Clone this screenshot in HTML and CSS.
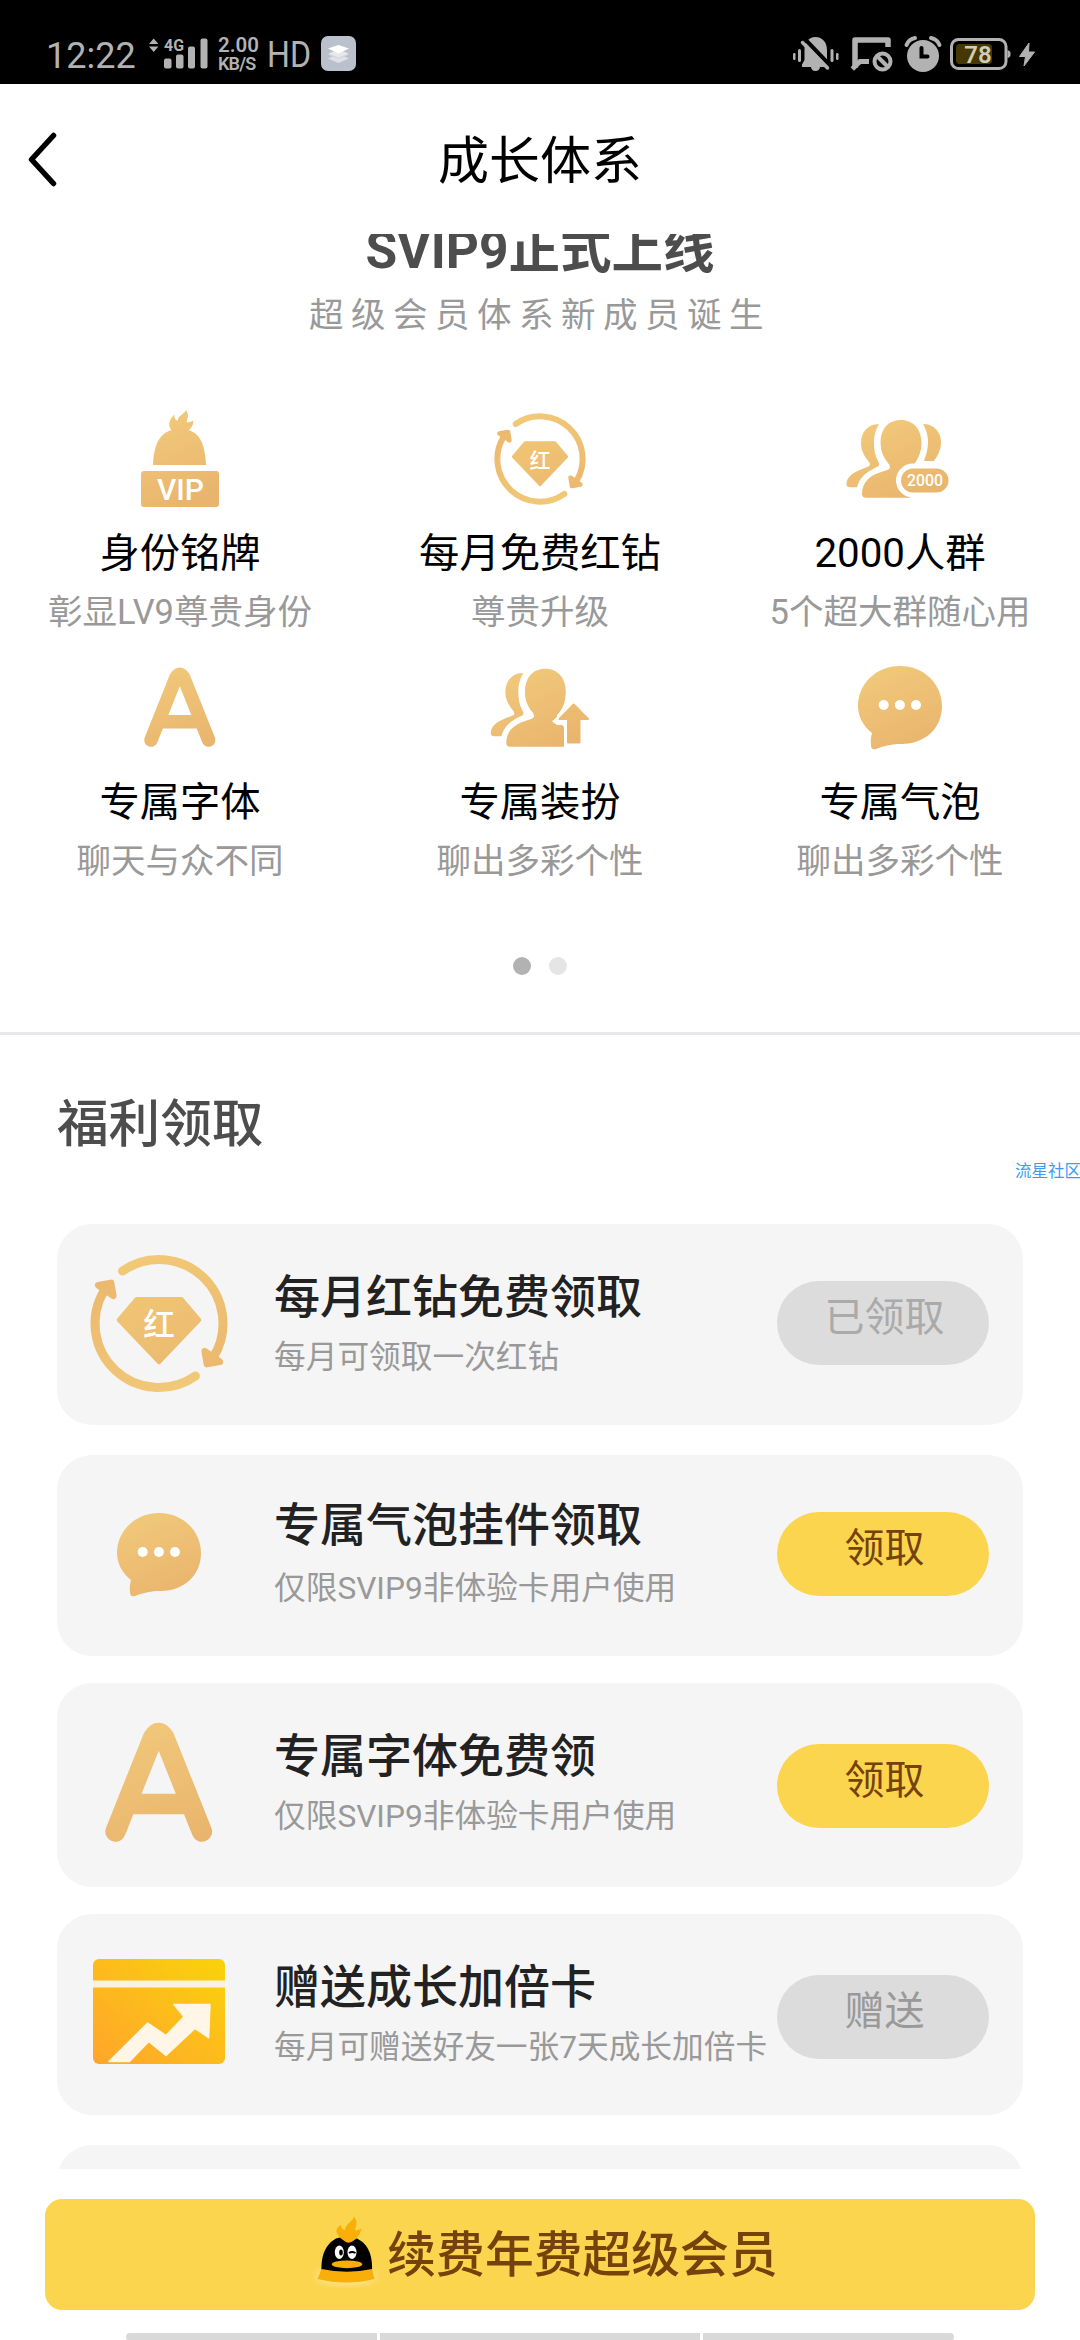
FILE: index.html
```html
<!DOCTYPE html>
<html lang="zh-CN">
<head>
<meta charset="utf-8">
<title>成长体系</title>
<link rel="stylesheet" href="styles.css">
</head>
<body>
<svg class="defs" width="0" height="0">
  <defs>
    <linearGradient id="gold" gradientUnits="userSpaceOnUse" x1="30" y1="10" x2="70" y2="105">
      <stop offset="0" stop-color="#f2cb7c"/><stop offset="1" stop-color="#e9b46d"/>
    </linearGradient>
    <linearGradient id="card-gold" x1="1" y1="0" x2="0" y2="1">
      <stop offset="0" stop-color="#f9d30a"/><stop offset="0.55" stop-color="#fdb91e"/><stop offset="1" stop-color="#ffa52a"/>
    </linearGradient>
    <g id="cycle-half">
      <path d="M-24.3 -35A42.6 42.6 0 0 1 36.5 22" fill="none" stroke="url(#gold-c)" stroke-width="6" stroke-linecap="round"/>
      <path d="M30.5 18.5L32 27L40.5 25.5Z" fill="url(#gold-c)" stroke="url(#gold-c)" stroke-width="4.5" stroke-linejoin="round"/>
    </g>
    <linearGradient id="gold-c" gradientUnits="userSpaceOnUse" x1="-25" y1="-45" x2="15" y2="45">
      <stop offset="0" stop-color="#f2ca78"/><stop offset="1" stop-color="#ebb76e"/>
    </linearGradient>
    <symbol id="i-diamond" viewBox="0 0 120 120">
      <g transform="translate(60 59)">
        <use href="#cycle-half"/>
        <use href="#cycle-half" transform="rotate(180)"/>
        <path d="M-15 -16.5H15L27 -2.3L0 26L-27 -2.3Z" fill="url(#gold-c)" stroke="url(#gold-c)" stroke-width="2.5" stroke-linejoin="round"/>
        <text class="glyph-hong" x="0" y="8.500" text-anchor="middle">红</text>
      </g>
    </symbol>
    <symbol id="i-a" viewBox="0 0 120 120">
      <path d="M31 91L56 28.5Q59.8 22 63.6 28.5L88.6 91M42 72.7H78" fill="none" stroke="url(#gold)" stroke-width="13.6" stroke-linecap="round" stroke-linejoin="round"/>
    </symbol>
    <symbol id="i-bubble" viewBox="0 0 120 120">
      <path fill="url(#gold)" d="M60 17C84 17 102 35 102 57C102 80 84 95 62 95C52 95 45 96.500 36 100Q31 101.500 31 96C30.500 91 31 88 32 84C23 77 18 67 18 57C18 35 36 17 60 17Z"/>
      <g fill="#fff"><circle cx="43.7" cy="56" r="5"/><circle cx="59.900" cy="56" r="5"/><circle cx="76" cy="56" r="5"/></g>
    </symbol>
    <g id="friend-back">
      <path d="M39 24C27 24 21 33 21 43C21 51 25 57 29 62C31 65 30 66 26 67.500C13 72 6.500 77 6.500 84Q6.500 87.300 10 87.300H17C19 79 25 72 38 66.500C40 65 39 63 38 61C35 56 34 50 34 43C34 35 36 29 39 24Z"/>
    </g>
  </defs>
</svg>

<div class="screen">
  <header class="status">
    <div class="status-left">
      <span class="time">12:22</span>
      <svg class="signal" width="46" height="34" viewBox="0 0 46 34" fill="#b2b2b2">
        <path d="M0 9L4.700 3.500L9.400 9ZM0 11.500H9.400L4.700 17Z"/>
        <text class="net" x="15" y="15.500" textLength="20" lengthAdjust="spacingAndGlyphs">4G</text>
        <rect x="15" y="23.500" width="7.500" height="10" rx="2"/><rect x="27" y="19.500" width="7.500" height="14" rx="2"/><rect x="39" y="11.500" width="7" height="22" rx="2"/>
      </svg>
      <svg class="signal-end" width="8" height="34" viewBox="0 0 8 34"><rect x="0.500" y="3.500" width="7" height="30" rx="2" fill="#b2b2b2"/></svg>
      <span class="speed"><span>2.00</span><span class="unit">KB/S</span></span>
      <svg class="hd" width="42" height="44" viewBox="0 0 42 44"><text class="hd-text" x="-1" y="32" textLength="44" lengthAdjust="spacingAndGlyphs">HD</text></svg>
      <svg class="app" width="35" height="35" viewBox="0 0 35 35">
        <rect width="35" height="35" rx="7" fill="#bbc0cd"/>
        <path fill="#dfe1e6" d="M7 22.500L17.500 18L28 22.500L17.500 27Z"/><path fill="#d2d5dc" d="M7 18.500L17.500 14L28 18.500L17.500 23Z"/><path fill="#e6e8ec" d="M7.500 17.500L17.500 13.500L27.500 17.500L17.500 21.500Z"/><path fill="#fff" d="M7 12.500L17.500 9L28 12.500L17.500 17.500Z"/>
      </svg>
    </div>
    <svg class="status-right" width="244" height="38" viewBox="0 0 244 38" fill="#b2b2b2">
      <g>
        <rect x="0" y="18" width="2.500" height="7" rx="1.200"/><rect x="5" y="14" width="3" height="13" rx="1.500"/>
        <rect x="37.500" y="14" width="3" height="13" rx="1.500"/><rect x="43" y="18" width="2.500" height="7" rx="1.200"/>
        <path d="M22.500 2C29.500 2 34 7.500 34 15V24.500L37 30V32H27Q26.500 36 22.500 36T18 32H9V29.500L11.500 25V15C11.500 7.500 15.500 2 22.500 2Z"/>
        <path d="M9 1L40 33.500" stroke="#000" stroke-width="4"/><path d="M9.500 7.500L34.500 33" stroke="#b2b2b2" stroke-width="3.500" stroke-linecap="round"/>
      </g>
      <g fill="none" stroke="#b2b2b2">
        <path d="M62 33V5H95V12" stroke-width="5.500" stroke-linejoin="round"/>
        <path d="M59.300 34L67 26.500H76" stroke-width="5"/>
        <circle cx="89.500" cy="26.500" r="8" stroke-width="4"/><path d="M84 21L95 32" stroke-width="4"/>
      </g>
      <g>
        <circle cx="130" cy="21" r="16"/>
        <path d="M113.500 10Q116 4 122 3M138 3Q144 4 146.500 10" fill="none" stroke="#b2b2b2" stroke-width="4" stroke-linecap="round"/>
        <path d="M128.500 13V21.500H134.500" fill="none" stroke="#000" stroke-width="4" stroke-linecap="round"/>
      </g>
      <g>
        <rect x="158.500" y="4.500" width="54.500" height="29" rx="7" fill="none" stroke="#b2b2b2" stroke-width="3"/>
        <path d="M214.500 15Q218 16 217.500 19Q218 22 214.500 23Z"/>
        <rect x="163" y="9" width="36" height="20" rx="3.500" fill="#453800"/>
        <text class="battery-text" x="185" y="27.500" text-anchor="middle">78</text>
        <path d="M236 8L226.500 21.500H232.500L231 31L241.500 17H235.500Z" stroke="#b2b2b2" stroke-width="1" stroke-linejoin="round"/>
      </g>
    </svg>
  </header>

  <nav class="titlebar">
    <svg class="back" width="30" height="58" viewBox="0 0 30 58"><path d="M26.500 5.500L4.500 29.500L26.500 53.500" fill="none" stroke="#000" stroke-width="5.500" stroke-linecap="round" stroke-linejoin="round"/></svg>
    <h1>成长体系</h1>
  </nav>

  <main class="content">
    <section class="intro">
      <h2>SVIP9正式上线</h2>
      <p>超级会员体系新成员诞生</p>
    </section>

    <section class="features">
      <div class="feature">
        <svg width="120" height="120" viewBox="0 0 120 120">
          <path fill="url(#gold)" d="M33 65C34 42 41 29 60 29C79 29 85 42 86 65ZM52 31C48 26 48 21 54.500 14.500C54 19 56 20.500 58 20.500C57 16 64 15 66 10C69 14 68 18 66.500 22C70 23 72 21 73 20.500C74 25 71 28 68 31Z"/>
          <rect x="21" y="71" width="78" height="36" rx="3" fill="url(#gold)"/>
          <text class="glyph-vip" x="60.500" y="100" text-anchor="middle">VIP</text>
        </svg>
        <h3>身份铭牌</h3><p>彰显LV9尊贵身份</p>
      </div>
      <div class="feature">
        <svg width="120" height="120"><use href="#i-diamond"/></svg>
        <h3>每月免费红钻</h3><p>尊贵升级</p>
      </div>
      <div class="feature">
        <svg width="120" height="120" viewBox="0 0 120 120" fill="url(#gold)">
          <use href="#friend-back"/>
          <path d="M83 24C94 24 101 32 101 42C101 50 98 55 94 61H84C86 55 88 49 88 43C88 35 86 29 83 24Z"/>
          <path d="M61 20C48 20 40.600 29 40.600 43C40.600 52 44 58 48 63C52 68 50 69.500 44 71C30 75 22 82 22 94Q22 97.700 26 97.700H70L75 63C79 57 81.500 51 81.500 43C81.500 29 73 20 61 20Z"/>
          <rect x="58.500" y="66" width="52.500" height="29" rx="14.500" stroke="#fff" stroke-width="5"/>
          <text class="glyph-2000" x="85" y="86.300" text-anchor="middle" textLength="36" lengthAdjust="spacingAndGlyphs">2000</text>
        </svg>
        <h3>2000人群</h3><p>5个超大群随心用</p>
      </div>
      <div class="feature">
        <svg width="120" height="120"><use href="#i-a"/></svg>
        <h3>专属字体</h3><p>聊天与众不同</p>
      </div>
      <div class="feature">
        <svg width="120" height="120" viewBox="0 0 120 120" fill="url(#gold)">
          <use href="#friend-back" x="4.300"/>
          <path d="M65.300 19.700C52.300 19.700 45 29 45 43C45 52 48 58 52.300 63C56 68 54 69.500 48 71C34 75 26.300 82 26.300 94Q26.300 97.700 30 97.700H84V78L77 70V66C83 60 85.800 52 85.800 43C85.800 29 78 19.700 65.300 19.700Z"/>
          <path d="M93.700 51.500L72 72.500L77 76H84.500V98H102.500V76H110L113 71Z" fill="#fff"/>
          <path d="M93.700 55.500L79.500 70H88V93.500H99.500V70H108Z" stroke="url(#gold)" stroke-width="2" stroke-linejoin="round"/>
        </svg>
        <h3>专属装扮</h3><p>聊出多彩个性</p>
      </div>
      <div class="feature">
        <svg width="120" height="120"><use href="#i-bubble"/></svg>
        <h3>专属气泡</h3><p>聊出多彩个性</p>
      </div>
    </section>
    <div class="dots"><i class="on"></i><i></i></div>

    <section class="benefits">
      <h2>福利领取</h2>
      <div class="watermark">流星社区</div>
      <article class="card">
        <svg class="icon" width="180" height="180"><use href="#i-diamond"/></svg>
        <div class="info"><h3>每月红钻免费领取</h3><p>每月可领取一次红钻</p></div>
        <button class="off faded">已领取</button>
      </article>
      <article class="card second">
        <svg class="icon" width="120" height="120"><use href="#i-bubble"/></svg>
        <div class="info"><h3>专属气泡挂件领取</h3><p>仅限SVIP9非体验卡用户使用</p></div>
        <button>领取</button>
      </article>
      <article class="card third">
        <svg class="icon" width="180" height="180"><use href="#i-a"/></svg>
        <div class="info"><h3>专属字体免费领</h3><p>仅限SVIP9非体验卡用户使用</p></div>
        <button>领取</button>
      </article>
      <article class="card fourth">
        <svg class="icon" width="132" height="105" viewBox="0 0 132 105">
          <rect width="132" height="105" rx="6" fill="url(#card-gold)"/>
          <rect y="21.500" width="132" height="7" fill="#fbf1df"/>
          <path fill="#fff6e8" stroke="#fff6e8" stroke-width="1.500" stroke-linejoin="round" d="M16 102.500L54.700 64L73 76.500L91 57.700L81 45.500H117L115.600 78.700L102 69.300L73 96.500L55.700 82.500L36.500 102.500Z"/>
        </svg>
        <div class="info"><h3>赠送成长加倍卡</h3><p>每月可赠送好友一张7天成长加倍卡</p></div>
        <button class="off">赠送</button>
      </article>
      <article class="card last"></article>
    </section>
  </main>

  <footer class="footer">
    <button class="renew">
      <svg width="70" height="76" viewBox="0 0 70 76">
        <ellipse class="glow" cx="34" cy="64" rx="30" ry="8"/>
        <path d="M9.500 60C8.500 40 16 31 24 26.500Q34 23 45 26.500C54 31 61 40 60 60Q35 64 9.500 60Z" fill="#000"/>
        <path d="M34 30C26 25 20 18 29 13C29 16 31 17.500 33 18C33 12 41 10 42 4.500C46 10 44 14 43 18C45 18.500 47 18 49 16.500C49 22 45 27 41 29Q37 32 34 30Z" fill="#f9ae08"/>
        <path d="M9.500 57Q35 62.500 60 57L62.500 67Q35 74 5.500 67Z" fill="#f9ae08"/>
        <ellipse cx="27.300" cy="40.300" rx="4.500" ry="6.700" fill="#fff"/><ellipse cx="40" cy="40.300" rx="4.500" ry="6.700" fill="#fff"/>
        <ellipse cx="29" cy="40.500" rx="1.800" ry="3" fill="#000"/><path d="M37 41Q40 39 43.500 41" stroke="#000" stroke-width="2" fill="none"/>
        <ellipse cx="35" cy="52.300" rx="15.300" ry="3.900" fill="#f9ae08"/>
      </svg>
      <span>续费年费超级会员</span>
    </button>
    <div class="gesture"><i></i><i class="mid"></i><i></i></div>
  </footer>
</div>
</body>
</html>
```
FILE: styles.css
```css
* { box-sizing: border-box; margin: 0; padding: 0; }
body { background: #fff; font-family: Roboto, "Noto Sans CJK SC", sans-serif; color: #000; }
h1, h2, h3 { font-weight: 400; }
svg { display: block; flex: none; }
button { border: 0; font-family: inherit; }
.defs { position: absolute; }
.screen { width: 1080px; height: 2340px; overflow: hidden; display: flex; flex-direction: column; background: #fff; }

.status { height: 84px; flex: none; background: #000; color: #b2b2b2; display: flex; justify-content: space-between; align-items: flex-start; padding: 35px 43px 0 46px; }
.status-left { display: flex; align-items: flex-start; }
.time { font-size: 36px; line-height: 42px; width: 103px; }
.signal-end { margin-left: 5px; }
.net { font-size: 16px; font-weight: 700; }
.speed { display: flex; flex-direction: column; margin: 1px 0 0 10px; width: 50px; font-size: 20.500px; font-weight: 600; line-height: 19px; }
.unit { font-size: 18px; line-height: 17px; letter-spacing: -0.800px; }
.hd { overflow: visible; }
.hd-text { font-size: 36px; fill: #b2b2b2; }
.app { margin: 1px 0 0 11px; }
.battery-text { font-size: 24px; font-weight: 600; fill: #cfcdbb; }

.titlebar { height: 150px; flex: none; display: grid; grid-template-columns: 90px 1fr 90px; align-items: center; }
.back { margin-left: 27px; }
.titlebar h1 { font-size: 51px; line-height: 60px; text-align: center; padding-top: 6px; }

.content { height: 1935px; flex: none; overflow: hidden; }
.intro { display: flow-root; text-align: center; height: 166px; }
.intro h2 { font-size: 51.500px; line-height: 60px; font-weight: 700; color: #4d4d4d; margin-top: -13px; }
.intro p { font-size: 34.500px; line-height: 42px; letter-spacing: 7.500px; color: #999; margin-top: 13px; }
.features { display: grid; grid-template-columns: repeat(3, 360px); grid-auto-rows: 249px; }
.feature { display: flex; flex-direction: column; align-items: center; white-space: nowrap; }
.feature h3 { font-size: 40.300px; line-height: 48px; margin-top: 10px; }
.feature p { font-size: 34.500px; line-height: 42px; margin-top: 13px; color: #999; }
.dots { display: flex; justify-content: center; gap: 18px; margin-top: 59px; height: 75px; }
.dots i { width: 18px; height: 18px; border-radius: 50%; background: #e5e5e5; }
.dots .on { background: #b2b2b2; }

.benefits { border-top: 3px solid #e6e8ec; padding: 60px 57px 0; }
.benefits h2 { font-size: 51.600px; font-weight: 500; line-height: 60px; color: #4d4d4d; }
.watermark { font-size: 16.500px; line-height: 20px; height: 20px; color: #3a9cf5; margin: 7px -57px 0 958px; white-space: nowrap; overflow: hidden; }
.card { height: 201px; border-radius: 35px; background: #f5f5f5; display: grid; grid-template-columns: 180px 1fr 212px; align-items: center; padding: 0 34px 0 12px; margin-top: 42px; }
.card .icon { justify-self: center; }
.card.second { margin-top: 30px; }
.card.third { margin-top: 27px; height: 204px; }
.card.fourth { margin-top: 27px; }
.card.fourth .icon { margin-top: -6px; }
.card.last { margin-top: 30px; }
.info { padding-left: 25px; white-space: nowrap; align-self: start; margin-top: 46px; }
.card h3 { font-size: 46px; line-height: 54px; font-weight: 500; color: #222; }
.card p { font-size: 31.700px; line-height: 38px; color: #999; margin-top: 15px; }
.card.second .info { margin-top: 43px; }
.card.second p { margin-top: 18px; }
.card button { width: 212px; height: 84px; border-radius: 42px; background: #fbd54d; color: #75420c; font-size: 40px; line-height: 48px; padding: 0 0 10px 3px; align-self: start; margin-top: 57px; }
.third button, .fourth button { margin-top: 61px; }
.card .off { background: #dcdcdc; color: #999; }
.card .faded { color: #aaa; }

.footer { flex: 1; padding-top: 30px; }
.renew { width: 990px; height: 111px; margin: 0 auto; border-radius: 17px; background: #fbd54d; display: flex; justify-content: center; align-items: center; gap: 5px; color: #75420c; font-size: 48.800px; font-weight: 500; padding: 0 0 9px 10px; }
.gesture { display: flex; gap: 3px; margin: 23px 126px 0; height: 8px; }
.gesture i { flex: 251; background: #d9d9d9; }
.gesture .mid { flex: 320; }
.gesture i:first-child { border-radius: 4px 0 0 4px; }
.gesture i:last-child { border-radius: 0 4px 4px 0; }

.glyph-hong { font-size: 21px; font-weight: 500; fill: #fff; }
.glyph-vip { font-size: 30px; font-weight: 500; fill: #fff; }
.glyph-2000 { font-size: 16.500px; font-weight: 500; fill: #fff; }
.glow { fill: #fde9a0; filter: blur(4px); }
```
